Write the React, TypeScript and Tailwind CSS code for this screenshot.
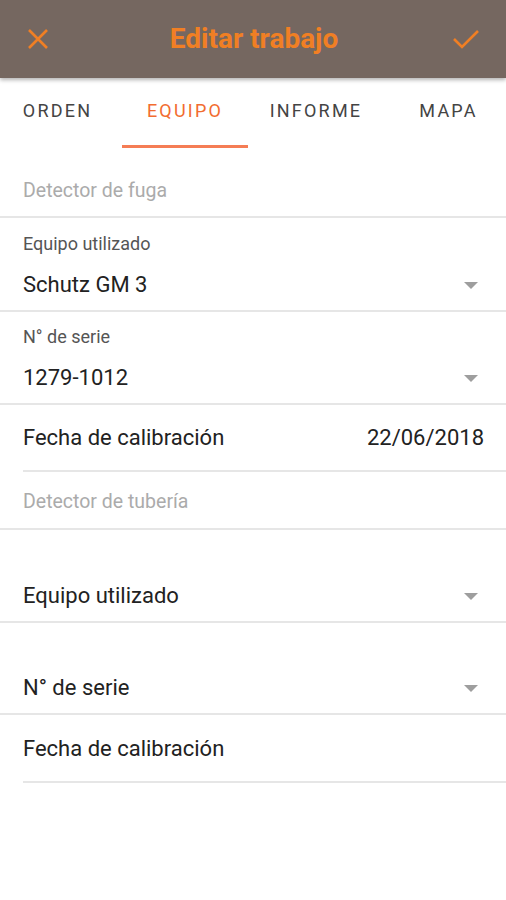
import React from 'react';

const Arrow: React.FC = () => (
  <svg width="14" height="7" viewBox="0 0 14 7" className="mr-[28px]">
    <path d="M0 0 L14 0 L7 7 Z" fill="#9e9e9e" />
  </svg>
);

const SelectRow: React.FC<{ label?: string; value: string; pt: string; h: string }> = ({ label, value, pt, h }) => (
  <div className={`border-b-2 border-[#e6e6e6] ${h} ${pt}`}>
    {label && <div className="pl-[23px] text-[18px] leading-[20px] text-[#555]">{label}</div>}
    <div className={`flex items-center justify-between pl-[23px] ${label ? 'mt-[19px]' : ''}`}>
      <span className="text-[22px] leading-[24px] text-[#222]">{value}</span>
      <Arrow />
    </div>
  </div>
);

const App: React.FC = () => {
  const tabs = [
    { t: 'ORDEN', cls: 'w-[122px] pr-[7px]' },
    { t: 'EQUIPO', cls: 'w-[126px]' },
    { t: 'INFORME', cls: 'w-[136px]' },
    { t: 'MAPA', cls: 'w-[122px] pl-[7px]' },
  ];

  return (
    <div className="w-[506px] h-[900px] bg-white overflow-hidden" style={{ fontFamily: 'Roboto, "Noto Sans", sans-serif' }}>
      <div className="relative z-10 h-[78px] bg-[#756760] flex items-center justify-between px-[26px] shadow-[0_2px_4px_rgba(0,0,0,0.3)]">
        <svg width="24" height="24" viewBox="0 0 24 24">
          <path d="M3 3 L21 21 M21 3 L3 21" stroke="#f07f24" strokeWidth="2.6" fill="none" />
        </svg>
        <h1 className="text-[28px] leading-[32px] font-bold text-[#f07f24] pl-[6px]">Editar trabajo</h1>
        <svg width="28" height="22" viewBox="0 0 28 22">
          <path d="M2 11 L10 19 L26 3" stroke="#f07f24" strokeWidth="2.6" fill="none" />
        </svg>
      </div>

      <div className="flex h-[72px]">
        {tabs.map((tab, i) => (
          <div key={tab.t} className={`flex flex-col items-center justify-between pt-[23px] ${tab.cls}`}>
            <span
              className={`text-[18px] leading-[20px] tracking-[2.2px] font-normal ${i === 1 ? 'text-[#f26c30]' : 'text-[#444]'}`}
            >
              {tab.t}
            </span>
            {i === 1 && <div className="h-[3px] w-full bg-[#f57d55] mb-[2px]" />}
          </div>
        ))}
      </div>

      <div className="h-[68px] pt-[30px] pl-[23px] border-b-2 border-[#e6e6e6]">
        <span className="text-[19.5px] leading-[20px] text-[#ababab]">Detector de fuga</span>
      </div>

      <SelectRow label="Equipo utilizado" value="Schutz GM 3" pt="pt-[16px]" h="h-[94px]" />
      <SelectRow label="N° de serie" value="1279-1012" pt="pt-[15px]" h="h-[93px]" />

      <div className="h-[67px] pl-[23px]">
        <div className="h-full pt-[21px] border-b-2 border-[#e6e6e6]">
          <div className="flex items-center justify-between pr-[22px]">
            <span className="text-[22px] leading-[24px] text-[#222]">Fecha de calibración</span>
            <span className="text-[22px] leading-[24px] text-[#222]">22/06/2018</span>
          </div>
        </div>
      </div>

      <div className="h-[58px] pt-[19px] pl-[23px] border-b-2 border-[#e6e6e6]">
        <span className="text-[19.5px] leading-[20px] text-[#ababab]">Detector de tubería</span>
      </div>

      <SelectRow value="Equipo utilizado" pt="pt-[54px]" h="h-[93px]" />
      <SelectRow value="N° de serie" pt="pt-[53px]" h="h-[92px]" />

      <div className="h-[68px] pl-[23px]">
        <div className="h-full pt-[22px] border-b-2 border-[#e6e6e6]">
          <span className="text-[22px] leading-[24px] text-[#222]">Fecha de calibración</span>
        </div>
      </div>
    </div>
  );
};

export default App;
